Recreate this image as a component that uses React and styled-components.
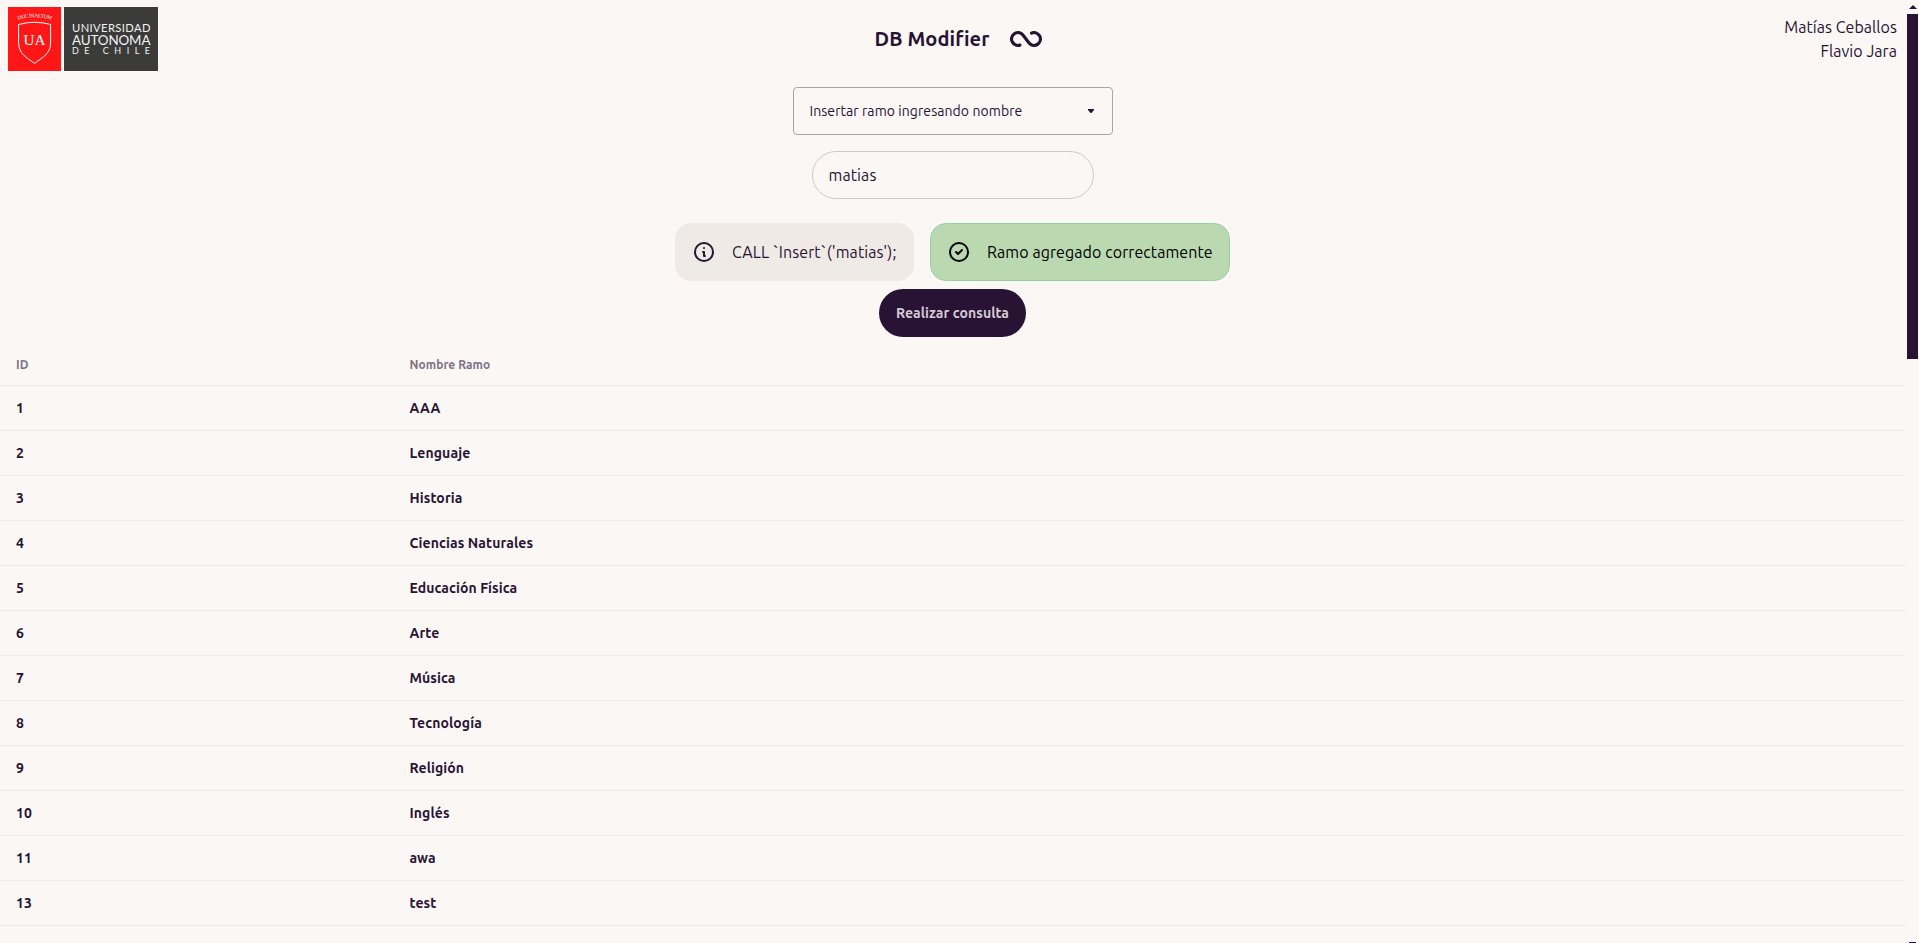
import React from "react";
import styled, { createGlobalStyle } from "styled-components";

const ink = "#291334";
const paper = "#faf7f5";
const line = "#efeae6";
const sans = `Ubuntu, "Noto Sans", sans-serif`;

const GlobalStyle = createGlobalStyle`
  *, *::before, *::after { box-sizing: border-box; }
  body {
    margin: 0;
    overflow: hidden;
    background: ${paper};
    color: ${ink};
    font-family: ${sans};
    font-size: 16px;
    line-height: 24px;
  }
`;

const Screen = styled.div`
  display: flex;
  height: 943px;
  overflow: hidden;
`;

const Page = styled.div`
  flex: 1;
  min-width: 0;
  display: flex;
  flex-direction: column;
`;

const Navbar = styled.header`
  display: grid;
  grid-template-columns: 1fr auto 1fr;
  align-items: center;
  flex: none;
  height: 79px;
  padding: 0 10px 1px 8px;
`;

const Brand = styled.div`
  display: flex;
  align-items: center;
  svg { display: block; }
`;

const Title = styled.h1`
  display: flex;
  align-items: center;
  gap: 21px;
  margin: 0 0 0 12px;
  font-size: 20px;
  line-height: 28px;
  font-weight: 700;
  letter-spacing: 0.1px;
  white-space: nowrap;
`;

const Authors = styled.div`
  text-align: right;
  letter-spacing: 0.05px;
`;

const Form = styled.main`
  display: flex;
  flex-direction: column;
  align-items: center;
  flex: none;
  padding: 8px 2px 8px 0;
`;

const SelectBox = styled.div`
  display: flex;
  align-items: center;
  justify-content: space-between;
  width: 320px;
  height: 48px;
  padding: 0 18px 0 16px;
  border: 1px solid #a9a5a8;
  border-radius: 4px;
  font-size: 14px;
  letter-spacing: 0.07px;
`;

const TextInput = styled.input`
  width: 282px;
  height: 48px;
  margin-top: 16px;
  padding: 0 16px;
  border: 1px solid #d0cacf;
  border-radius: 24px;
  outline: none;
  background: transparent;
  color: inherit;
  font: inherit;
  letter-spacing: 0.1px;
`;

const Alerts = styled.div`
  display: flex;
  gap: 16px;
  margin-top: 24px;
`;

const tones = {
  info: { bg: line, border: line, fg: ink },
  success: { bg: "#bad9b0", border: "#95d0a2", fg: "#000000" },
};

const Alert = styled.div`
  display: flex;
  align-items: center;
  gap: 16px;
  width: ${(p) => p.$width}px;
  height: 58px;
  padding: 0 16px;
  border: 1px solid ${(p) => tones[p.$tone].border};
  border-radius: 16px;
  background: ${(p) => tones[p.$tone].bg};
  color: ${(p) => tones[p.$tone].fg};
  white-space: nowrap;
  letter-spacing: 0.08px;
  svg { flex: none; }
`;

const Button = styled.button`
  width: 147px;
  height: 48px;
  margin-top: 8px;
  padding: 0;
  border: 0;
  border-radius: 24px;
  background: ${ink};
  color: #d4cbd3;
  font: 700 14px/20px ${sans};
  letter-spacing: 0.08px;
`;

const Table = styled.table`
  width: 1905px;
  table-layout: fixed;
  border-collapse: separate;
  border-spacing: 0;
  text-align: left;
`;

const HeadCell = styled.th`
  width: ${(p) => p.$width || "auto"};
  height: 41px;
  padding: 0 16px;
  border-bottom: 1px solid ${line};
  color: #7f7385;
  font-size: 12px;
  line-height: 16px;
  font-weight: 700;
  letter-spacing: 0.06px;
`;

const Cell = styled.td`
  height: 45px;
  padding: 0 16px;
  border-bottom: 1px solid ${line};
  font-size: 14px;
  line-height: 20px;
  font-weight: 700;
  letter-spacing: 0.1px;
`;

const ScrollTrack = styled.div`
  display: flex;
  flex-direction: column;
  align-items: center;
  flex: none;
  width: 12px;
  height: 943px;
  padding: 5px 1px 0 0;
  svg { display: block; }
`;

const ScrollThumb = styled.div`
  width: 11px;
  height: 345px;
  margin: 5px 0 auto;
  background: ${ink};
`;

const ScrollEnd = styled.div`
  width: 7px;
  height: 1px;
  background: ${ink};
`;

const courses = [
  [1, "AAA"],
  [2, "Lenguaje"],
  [3, "Historia"],
  [4, "Ciencias Naturales"],
  [5, "Educación Física"],
  [6, "Arte"],
  [7, "Música"],
  [8, "Tecnología"],
  [9, "Religión"],
  [10, "Inglés"],
  [11, "awa"],
  [13, "test"],
];

function UniversityLogo() {
  return (
    <svg width="150" height="64" viewBox="0 0 150 64">
      <rect width="53" height="64" fill="#ff1616" />
      <rect x="56" width="94" height="64" fill="#3b3b39" />
      <path id="motto" d="M9 13 Q26.5 7.6 44.5 13" fill="none" />
      <text fill="#fff" fontFamily="Liberation Serif, serif" fontSize="5.4">
        <textPath href="#motto" textLength="34" startOffset="1">DUC IN ALTUM</textPath>
      </text>
      <path
        d="M10.6 17.5 Q26.5 13 42.6 17.5 V36 C42.6 46 35 50.5 26.5 56.3 C18 50.5 10.6 46 10.6 36 Z"
        fill="none"
        stroke="#fff"
        strokeWidth="1"
      />
      <g fill="#fff">
        <text x="15.6" y="38" textLength="22" lengthAdjust="spacingAndGlyphs" fontFamily="Liberation Serif, serif" fontSize="14.5">UA</text>
        <g fontFamily="Lato, sans-serif" fill="#f2f2f2">
          <text x="64" y="25" textLength="78.5" fontSize="11.2">UNIVERSIDAD</text>
          <text x="64" y="37.8" textLength="78.5" fontSize="13.4">AUTONOMA</text>
          <text x="64" y="47.4" textLength="78" fontSize="9" xmlSpace="preserve">DE CHILE</text>
        </g>
      </g>
    </svg>
  );
}

function LoopIcon() {
  return (
    <svg width="32" height="16" viewBox="0 0 32 16" fill="none" stroke={ink} strokeWidth="3.2" strokeLinecap="round">
      <path d="M9.9 14.1 A6.4 6.4 0 1 1 12.6 3.55 L19.4 12.45 A6.4 6.4 0 1 0 21.5 2.1" />
    </svg>
  );
}

function StatusIcon({ d }) {
  return (
    <svg width="24" height="24" viewBox="0 0 24 24" fill="none" stroke="currentColor" strokeWidth="2" strokeLinecap="round" strokeLinejoin="round">
      <path d={d} />
    </svg>
  );
}

export default function App() {
  return (
    <Screen>
      <GlobalStyle />
      <Page>
        <Navbar>
          <Brand>
            <UniversityLogo />
          </Brand>
          <Title>
            DB Modifier
            <LoopIcon />
          </Title>
          <Authors>
            <div>Matías Ceballos</div>
            <div>Flavio Jara</div>
          </Authors>
        </Navbar>
        <Form>
          <SelectBox>
            Insertar ramo ingresando nombre
            <svg width="6" height="4" viewBox="0 0 6 4">
              <path d="M0 0H6V1L3.5 4H2.5L0 1Z" fill={ink} />
            </svg>
          </SelectBox>
          <TextInput defaultValue="matias" />
          <Alerts>
            <Alert $tone="info" $width={239}>
              <StatusIcon d="M13 16h-1v-4h-1m1-4h.01M21 12a9 9 0 11-18 0 9 9 0 0118 0z" />
              CALL `Insert`('matias');
            </Alert>
            <Alert $tone="success" $width={300}>
              <StatusIcon d="M9 12l2 2 4-4m6 2a9 9 0 11-18 0 9 9 0 0118 0z" />
              Ramo agregado correctamente
            </Alert>
          </Alerts>
          <Button>Realizar consulta</Button>
        </Form>
        <Table>
          <thead>
            <tr>
              <HeadCell $width="393.5px">ID</HeadCell>
              <HeadCell>Nombre Ramo</HeadCell>
            </tr>
          </thead>
          <tbody>
            {courses.map(([id, name]) => (
              <tr key={id}>
                <Cell>{id}</Cell>
                <Cell>{name}</Cell>
              </tr>
            ))}
          </tbody>
        </Table>
      </Page>
      <ScrollTrack>
        <svg width="8" height="4" viewBox="0 0 8 4">
          <path d="M4 0L8 4H0Z" fill={ink} />
        </svg>
        <ScrollThumb />
        <ScrollEnd />
      </ScrollTrack>
    </Screen>
  );
}
